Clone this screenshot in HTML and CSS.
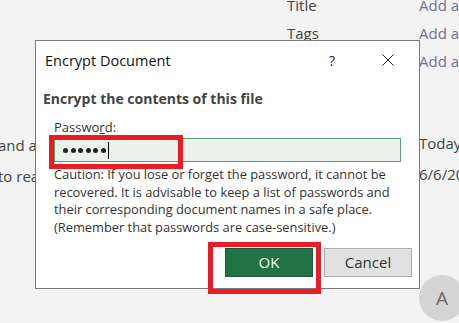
FILE: index.html
```html
<!DOCTYPE html>
<html lang="en">
<head>
  <meta charset="UTF-8" />
  <title>Encrypt Document</title>
  <link rel="stylesheet" href="styles.css">
</head>
<body>

  <div class="backstage">
    <!-- Info properties behind the dialog -->
    <div class="info-grid">
      <span class="cell"></span><span class="prop-label">Title</span><span class="prop-value">Add a title</span>
      <span class="cell"></span><span class="prop-label">Tags</span><span class="prop-value">Add a tag</span>
      <span class="cell"></span><span class="cell"></span><span class="prop-value">Add a category</span>
      <span class="row-gap"></span>
      <span class="body-text">and add protection</span><span class="cell"></span><span class="prop-value dark">Today, 10:02 AM</span>
      <span class="body-text">to read the file</span><span class="cell"></span><span class="prop-value dark">6/6/2023</span>
    </div>

    <div class="avatar">A</div>

    <!-- Encrypt dialog -->
    <div class="dialog">
      <div class="dialog-titlebar">
        <span class="dialog-title">Encrypt Document</span>
        <span class="help-btn">?</span>
        <span class="close-btn">
          <svg width="12" height="12" viewBox="0 0 12 12">
            <path d="M0.5 0.5 L11.5 11.5 M11.5 0.5 L0.5 11.5" stroke="#222" stroke-width="1" fill="none"/>
          </svg>
        </span>
      </div>

      <h2 class="dialog-heading">Encrypt the contents of this file</h2>

      <div class="form-group">
        <label class="pw-label">Passwo<u>r</u>d:</label>
        <div class="pw-input">
          <span class="dot"></span><span class="dot"></span><span class="dot"></span><span class="dot"></span><span class="dot"></span><span class="dot"></span><span class="caret"></span>
        </div>
        <p class="caution">Caution: If you lose or forget the password, it cannot be recovered. It is advisable to keep a list of passwords and their corresponding document names in a safe place. (Remember that passwords are case-sensitive.)</p>
      </div>

      <div class="dialog-buttons">
        <button class="btn btn-ok">OK</button>
        <button class="btn btn-cancel">Cancel</button>
      </div>

      <!-- red callouts -->
      <div class="mark mark-input"></div>
      <div class="mark mark-ok"></div>
    </div>
  </div>

</body>
</html>
```

FILE: styles.css
```css
/* Reset */
* {
  box-sizing: border-box;
  margin: 0;
  padding: 0;
}

body {
  font-family: 'Open Sans', 'Noto Sans', sans-serif;
  background: #f3f3f3;
  color: #333;
  overflow: hidden;
}

.backstage {
  position: relative;
  width: 459px;
  height: 323px;
  overflow: hidden;
}

/* Info grid (background) */
.info-grid {
  display: grid;
  grid-template-columns: 289px 132px 200px;
  grid-template-rows: 28px 28px 28px 54px 31px 31px;
  margin-left: -2px;
  margin-top: -5px;
  font-size: 15px;
  white-space: nowrap;
}

.row-gap {
  grid-column: 1 / 4;
}

.prop-label {
  color: #444;
}

.prop-value {
  color: #72728c;
}

.prop-value.dark,
.body-text {
  color: #444;
}

.body-text {
  padding-top: 2px;
}

.avatar {
  position: absolute;
  left: 419px;
  top: 275px;
  width: 46px;
  height: 46px;
  border-radius: 50%;
  background: #d4d4d4;
  color: #666;
  font-size: 19px;
  display: flex;
  align-items: center;
  justify-content: center;
}

/* Dialog */
.dialog {
  position: absolute;
  left: 35px;
  top: 40px;
  width: 385px;
  height: 249px;
  background: #fff;
  border: 1px solid #7a7a7a;
  padding: 0 18px 0 0;
  display: flex;
  flex-direction: column;
}

.dialog-titlebar {
  display: flex;
  align-items: center;
  height: 38px;
  padding-left: 9px;
}

.dialog-title {
  font-size: 14.5px;
  color: #111;
  flex: 1;
}

.help-btn {
  font-size: 14px;
  color: #222;
  margin-right: 47px;
}

.close-btn {
  display: flex;
  margin-right: 7px;
}

.dialog-heading {
  font-size: 14px;
  font-weight: bold;
  color: #444;
  padding-left: 7px;
  margin-top: 10px;
  line-height: 20px;
}

.form-group {
  padding-left: 18px;
  margin-top: 9px;
}

.pw-label {
  display: block;
  font-size: 13px;
  color: #333;
  line-height: 18px;
}

.pw-input {
  margin-top: 2px;
  height: 24px;
  border: 1px solid #55a06b;
  background: #e9f3ec;
  display: flex;
  align-items: center;
  padding-left: 8px;
  gap: 2.5px;
}

.dot {
  width: 5px;
  height: 5px;
  border-radius: 50%;
  background: #222;
}

.caret {
  width: 1px;
  height: 17px;
  background: #000;
}

.caution {
  font-size: 12.85px;
  line-height: 17.7px;
  color: #333;
  margin-top: 4px;
}

.dialog-buttons {
  display: flex;
  justify-content: flex-end;
  gap: 11px;
  margin-top: 11px;
  margin-right: -11px;
}

.btn {
  width: 88px;
  height: 29px;
  font-family: inherit;
  font-size: 15px;
}

.btn-ok {
  background: #217346;
  border: 1px solid #17593a;
  color: #eef6f1;
}

.btn-cancel {
  background: #e1e1e1;
  border: 1px solid #adadad;
  color: #333;
}

/* red highlight boxes */
.mark {
  position: absolute;
  border: 5px solid #ec1c24;
}

.mark-input {
  left: 13px;
  top: 94px;
  width: 134px;
  height: 34px;
}

.mark-ok {
  left: 172px;
  top: 201px;
  width: 113px;
  height: 52px;
}
```
